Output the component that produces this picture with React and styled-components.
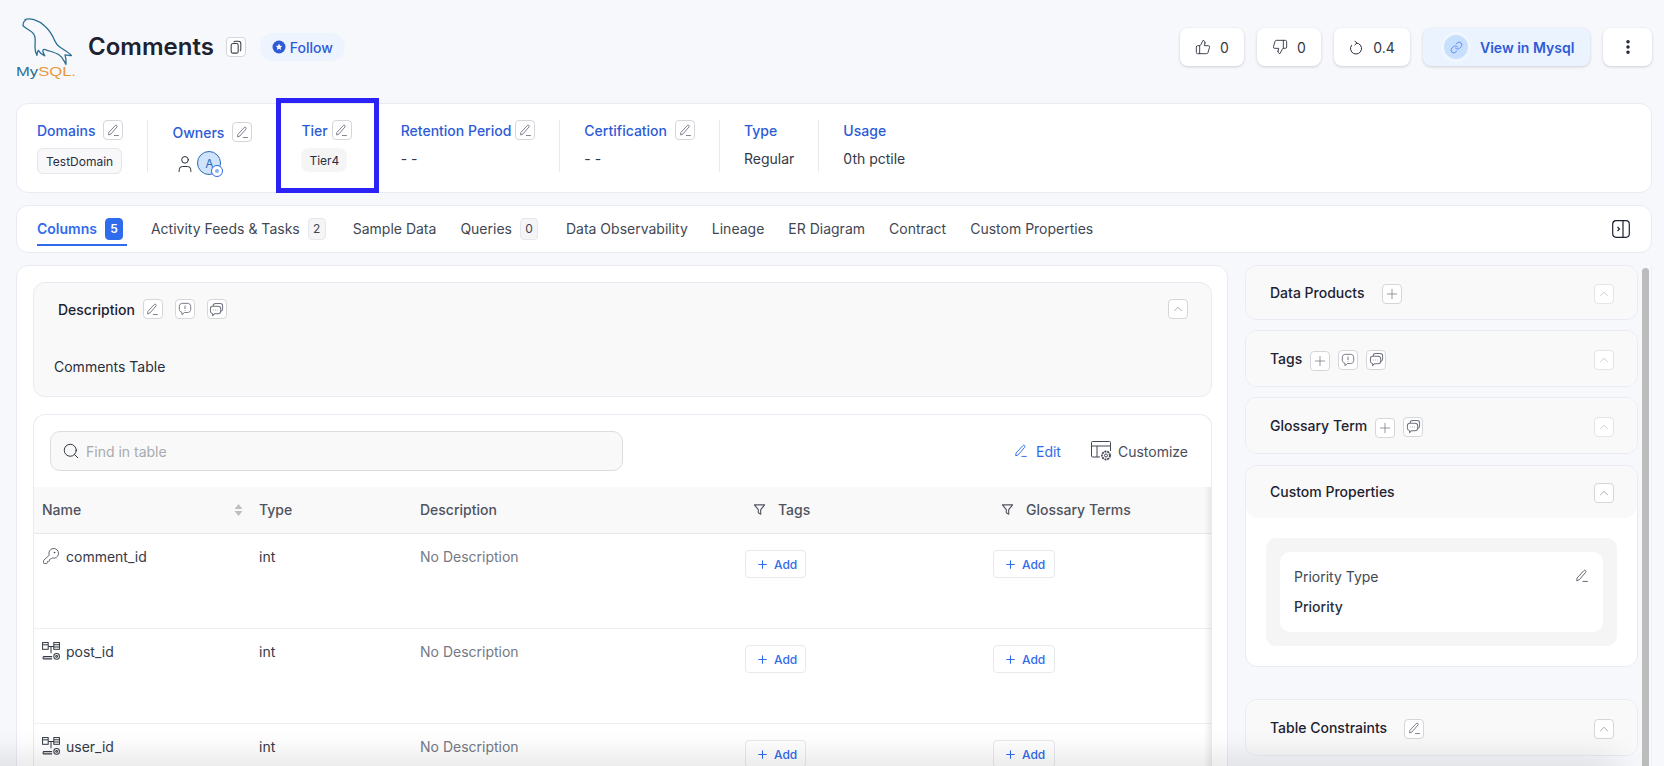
import React from "react";
import styled, { createGlobalStyle } from "styled-components";
import { ThumbsUp, ThumbsDown, Link, Search, KeyRound, Plus, ChevronUp, User, EllipsisVertical } from "lucide-react";

const GlobalStyle = createGlobalStyle`
  * { box-sizing: border-box; }
  body {
    margin: 0;
    background: #f7f8fc;
    font-family: Inter, "Noto Sans", sans-serif;
    color: #292f3d;
    overflow: hidden;
  }
`;

const BLUE = "#2d5bd7";
const LINK = "#2f6bed";

const Page = styled.div`
  position: relative;
  width: 1664px;
  height: 766px;
  padding: 0 12px 0 16px;
  overflow: hidden;
`;

const BottomFade = styled.div`
  position: absolute;
  left: -30px;
  right: 50px;
  bottom: -14px;
  height: 14px;
  box-shadow: 0 0 34px 4px rgba(0, 0, 0, 0.16);
`;

/* header */
const Header = styled.header`
  display: flex;
  align-items: flex-start;
  height: 103px;
  padding-top: 17px;
`;

const LogoMark = styled.svg`
  width: 60px;
  height: 62px;
  margin-right: 12px;
  flex: none;
`;

const TitleGroup = styled.div`
  display: flex;
  align-items: center;
  height: 32px;
  margin-top: 14px;
`;

const Title = styled.h1`
  margin: 0 12px 0 0;
  font-size: 24px;
  line-height: 32px;
  font-weight: 600;
  color: #1d2230;
`;

const IconButton = styled.span`
  display: inline-flex;
  align-items: center;
  justify-content: center;
  flex: none;
  width: 20px;
  height: 20px;
  margin-top: ${(p) => p.$drop || 0}px;
  background: #fff;
  border: 1px solid ${(p) => (p.$dim ? "#e5e5e8" : "#d5d6da")};
  border-radius: 4px;
  color: ${(p) => (p.$dim ? "#a9acb3" : "#6f7380")};
`;

const FollowPill = styled.span`
  display: inline-flex;
  align-items: center;
  gap: 4px;
  height: 28px;
  margin-left: 14px;
  padding: 0 12px;
  border-radius: 14px;
  background: #edf4fe;
  color: ${BLUE};
  font-size: 14px;
  font-weight: 500;
`;

const HeaderActions = styled.div`
  display: flex;
  align-items: center;
  gap: 13px;
  margin-left: auto;
  margin-top: 11px;
`;

const ActionButton = styled.div`
  display: flex;
  align-items: center;
  justify-content: center;
  gap: ${(p) => (p.$wide ? "10px" : "9px")};
  width: ${(p) => p.$width}px;
  height: 38px;
  background: #fff;
  border-radius: 8px;
  box-shadow: 0 1px 3px rgba(16, 24, 40, 0.18);
  font-size: 14px;
  color: #353a47;
`;

const ViewButton = styled.div`
  display: flex;
  align-items: center;
  gap: 12px;
  width: 167px;
  height: 38px;
  padding-left: 21px;
  background: #ebf3fe;
  border-radius: 8px;
  box-shadow: 0 1px 3px rgba(16, 24, 40, 0.18);
  color: ${BLUE};
  font-size: 14px;
  font-weight: 600;
`;

const LinkCircle = styled.span`
  display: flex;
  align-items: center;
  justify-content: center;
  width: 24px;
  height: 24px;
  border-radius: 50%;
  background: #c8e0fd;
  box-shadow: 0 0 0 3px #f0f6fe;
`;

/* cards */
const Card = styled.section`
  background: #fff;
  border: 1px solid #e9ebf3;
  border-radius: 12px;
`;

const DetailsCard = styled(Card)`
  display: flex;
  height: 90px;
  padding: 16px 0 0 20px;
`;

const DetailItem = styled.div`
  position: relative;
  align-self: flex-start;
  height: 52px;
  padding-right: 24px;
  margin-right: 24px;
  border-right: 1px solid ${(p) => (p.$last ? "transparent" : "#e9eaee")};
`;

const DetailHead = styled.div`
  display: flex;
  align-items: center;
  gap: ${(p) => p.$gap || 8}px;
  height: 20px;
  margin-top: ${(p) => (p.$shift ? "2px" : "0")};
  color: ${BLUE};
  font-size: 14px;
  font-weight: 500;
`;

const DetailValue = styled.div`
  display: flex;
  align-items: center;
  height: 26px;
  margin-top: ${(p) => (p.$text ? 5 : 8)}px;
  font-size: 14px;
  color: #353a47;
`;

const Chip = styled.span`
  display: inline-flex;
  align-items: center;
  height: ${(p) => (p.$plain ? 24 : 26)}px;
  padding: 0 8px;
  margin-top: ${(p) => (p.$plain ? "-2px" : "0")};
  background: ${(p) => (p.$plain ? "#f5f5f5" : "#f8f8fa")};
  border: ${(p) => (p.$plain ? "0" : "1px solid #e6e6ea")};
  border-radius: ${(p) => (p.$plain ? 8 : 6)}px;
  font-size: 12px;
  color: #292f3d;
`;

const Avatar = styled.span`
  position: relative;
  display: flex;
  align-items: center;
  justify-content: center;
  width: 24px;
  height: 24px;
  margin-left: 2px;
  border-radius: 50%;
  background: #cfe3fb;
  border: 1px solid #2c6cb8;
  color: #2c6cb8;
  font-size: 12px;
`;

const AvatarBadge = styled.span`
  position: absolute;
  right: -3px;
  bottom: -3px;
  width: 12px;
  height: 12px;
  border-radius: 50%;
  background: #fff;
  border: 1px solid ${LINK};
  &::after {
    content: "";
    position: absolute;
    inset: 3px;
    border-radius: 50%;
    background: #8db2ee;
  }
`;

const OwnerIcon = styled(User)`
  margin-left: 3px;
  margin-top: 1px;
`;

const Highlight = styled.div`
  position: absolute;
  left: -25px;
  top: -22px;
  width: 103px;
  height: 95px;
  border: 5px solid #2b22f5;
  pointer-events: none;
`;

const TabsCard = styled(Card)`
  display: flex;
  align-items: stretch;
  gap: 24px;
  height: 48px;
  margin-top: 12px;
  padding: 0 20px;
`;

const Tab = styled.div`
  display: flex;
  align-items: center;
  gap: 8px;
  padding-right: ${(p) => p.$pad || 0}px;
  font-size: 14px;
  font-weight: ${(p) => (p.$active ? 600 : 400)};
  color: ${(p) => (p.$active ? LINK : "#424754")};
  border-bottom: 2px solid ${(p) => (p.$active ? LINK : "transparent")};
  margin-bottom: 6px;
  padding-top: 7px;
`;

const TabBadge = styled.span`
  display: flex;
  align-items: center;
  justify-content: center;
  width: 18px;
  height: 22px;
  border-radius: 4px;
  background: ${(p) => (p.$active ? LINK : "#f5f5f7")};
  border: 1px solid ${(p) => (p.$active ? LINK : "#e6e7ec")};
  color: ${(p) => (p.$active ? "#fff" : "#3f4450")};
  font-size: 12px;
  font-weight: ${(p) => (p.$active ? 600 : 400)};
`;

const PanelToggle = styled.svg`
  align-self: center;
  margin-left: auto;
  margin-right: 1px;
  width: 18px;
  height: 18px;
`;

const Main = styled.div`
  display: flex;
  gap: 17px;
  margin-top: 12px;
`;

const LeftCard = styled(Card)`
  width: 1212px;
  flex: none;
  height: 560px;
  padding: 16px 15px 16px 16px;
`;

const DescriptionCard = styled(Card)`
  height: 115px;
  background: #f9f9f9;
`;

const DescriptionHead = styled.div`
  display: flex;
  align-items: center;
  gap: 12px;
  height: 52px;
  padding: 0 23px 0 24px;
  font-size: 14px;
  font-weight: 500;
  color: #1d2230;
`;

const DescriptionLabel = styled.span`
  margin-right: -4px;
`;

const DescriptionBody = styled.div`
  margin-top: 23px;
  padding-left: 20px;
  font-size: 14px;
  color: #292f3d;
`;

const TableCard = styled(Card)`
  position: relative;
  margin-top: 17px;
  padding-top: 16px;
  border-bottom: 0;
  border-radius: 12px 12px 0 0;
  overflow: hidden;
  height: 380px;
  &::after {
    content: "";
    position: absolute;
    top: 72px;
    right: 0;
    bottom: 0;
    width: 7px;
    background: linear-gradient(to right, rgba(0, 0, 0, 0), rgba(0, 0, 0, 0.07));
  }
`;

const Toolbar = styled.div`
  display: flex;
  align-items: center;
  height: 40px;
  padding: 0 23px 0 16px;
  margin-bottom: 16px;
  font-size: 14px;
`;

const SearchBox = styled.div`
  display: flex;
  align-items: center;
  gap: 6px;
  width: 573px;
  height: 40px;
  padding: 0 11px;
  background: #f9f9f9;
  border: 1px solid #dcdde1;
  border-radius: 10px;
  color: #a8aab0;
`;

const ToolbarLink = styled.span`
  display: flex;
  align-items: center;
  gap: ${(p) => p.$gap}px;
  margin-left: ${(p) => p.$left || 0}px;
  color: ${(p) => (p.$blue ? LINK : "#494e5a")};
`;

const Row = styled.div`
  display: grid;
  grid-template-columns: 217px 161px 325px 248px 228px;
  height: ${(p) => (p.$head ? 47 : 95)}px;
  background: ${(p) => (p.$head ? "#f9f9f9" : "#fff")};
  border-bottom: 1px solid ${(p) => (p.$head ? "#e8e8ea" : "#efeff1")};
  font-size: 14px;
  color: ${(p) => (p.$head ? "#4f5360" : "#353a47")};
  font-weight: ${(p) => (p.$head ? 500 : 400)};
`;

const HeadCell = styled.div`
  display: flex;
  align-items: center;
  justify-content: ${(p) => (p.$between ? "space-between" : "flex-start")};
  gap: 12px;
  padding: 0 ${(p) => (p.$between ? 8 : 0)}px 1px ${(p) => p.$left || 8}px;
`;

const Cell = styled.div`
  display: flex;
  align-items: flex-start;
  gap: 6px;
  padding: 13px 8px 0;
  line-height: 20px;
  color: ${(p) => (p.$muted ? "#757984" : "inherit")};
`;

const AddCell = styled.div`
  padding: 16px 8px 0;
`;

const AddButton = styled.span`
  display: inline-flex;
  align-items: center;
  gap: 5px;
  width: ${(p) => p.$width}px;
  height: 28px;
  padding-left: 10px;
  background: #fff;
  border: 1px solid #e8e9ef;
  border-radius: 4px;
  color: ${LINK};
  font-size: 12px;
  font-weight: 500;
`;

/* right side */
const RightColumn = styled.div`
  width: 393px;
  flex: none;
  display: flex;
  flex-direction: column;
  gap: 10px;
`;

const SideCard = styled(Card)`
  margin-top: ${(p) => p.$top || 0}px;
`;

const SideHead = styled.div`
  display: flex;
  align-items: center;
  gap: ${(p) => p.$gap || 8}px;
  height: ${(p) => p.$height || 55}px;
  padding: 2px 23px 0 24px;
  background: #f9f9fa;
  border-radius: 12px;
  font-size: 14px;
  font-weight: 500;
  color: #1d2230;
`;

const SideTitle = styled.span`
  margin-top: -3px;
`;

const CollapseButton = styled(IconButton)`
  margin-left: auto;
`;

const SideBody = styled.div`
  padding: 20px;
`;

const PropertyBox = styled.div`
  padding: 14px;
  background: #f5f5f6;
  border-radius: 10px;
`;

const PropertyInner = styled.div`
  height: 80px;
  padding: 14px;
  background: #fff;
  border-radius: 10px;
  font-size: 14px;
`;

const PropertyRow = styled.div`
  display: flex;
  align-items: center;
  justify-content: space-between;
  height: 20px;
  margin-bottom: 10px;
  color: ${(p) => (p.$strong ? "#292f3d" : "#424754")};
  font-weight: ${(p) => (p.$strong ? 500 : 400)};
`;

const ScrollTrack = styled.div`
  width: 14px;
  flex: none;
  margin-left: -17px;
  padding: 3px 2px 0 4px;
  height: 560px;
  border-right: 1px solid #eef0f6;
`;

const ScrollThumb = styled.div`
  height: 100%;
  background: #bcbcbc;
  border-radius: 4px 4px 0 0;
`;

/* icons */
const PencilIcon = ({ size = 13, color = "currentColor" }) => (
  <svg width={size} height={size} viewBox="0 0 16 16" fill="none" stroke={color} strokeWidth="1.1" strokeLinejoin="round">
    <path d="M10.2 1.8c.6-.6 1.500-.5 2 0 .5.6.5 1.300 0 1.900l-7.300 8.600-2.900 1.200.3-3.100z" />
    <path d="M8.600 14.200h6" />
  </svg>
);

const BubbleIcon = () => (
  <svg width="14" height="14" viewBox="0 0 16 16" fill="none" stroke="currentColor" strokeWidth="1.1" strokeLinejoin="round">
    <path d="M5 1.500h6c2 0 3.500 1.500 3.500 3.500v3.500c0 2-1.500 3.500-3.500 3.500H7.500l-3 2.500v-2.700C2.800 11.400 1.500 10 1.500 8.500V5c0-2 1.500-3.500 3.500-3.500z" />
    <path d="M8 4.200v3.800M8 9.400v.6" />
  </svg>
);

const BubblesIcon = () => (
  <svg width="15" height="15" viewBox="0 0 16 16" fill="none" stroke="currentColor" strokeWidth="1.1" strokeLinejoin="round">
    <path d="M4.500 4.300V4c0-1.400 1.100-2.500 2.500-2.500h5c1.400 0 2.500 1.100 2.500 2.500v3.500c0 1.200-.8 2.200-2 2.500" />
    <path d="M4 4.500h5.500c1.700 0 3 1.300 3 3v2c0 1.700-1.300 3-3 3H6l-2.200 2v-2.100C2.400 12 1.500 10.900 1.500 9.500v-2.500c0-1.400 1.100-2.500 2.500-2.500z" />
    <path d="M4.400 8.500h.5M6.700 8.500h.5M9 8.500h.5" />
  </svg>
);

const CopyIcon = () => (
  <svg width="14" height="14" viewBox="0 0 16 16" fill="none" stroke="#3b3f4a" strokeWidth="1.200" strokeLinejoin="round">
    <rect x="2.500" y="4" width="8" height="11" rx="2" />
    <path d="M5.500 2.600c.3-.7 1-1.100 1.700-1.100h3.600c1.500 0 2.700 1.200 2.700 2.700v6.600c0 .8-.4 1.500-1.100 1.800" />
  </svg>
);

const FollowIcon = () => (
  <svg width="14" height="14" viewBox="0 0 14 14">
    <circle cx="7" cy="7" r="6.500" fill={BLUE} />
    <path d="M7 3.600l1 2.200 2.300.2-1.700 1.600.5 2.300-2.100-1.200-2.100 1.200.5-2.300-1.700-1.600 2.300-.2z" fill="#fff" />
  </svg>
);

const VersionIcon = () => (
  <svg width="14" height="15" viewBox="0 0 14 15" fill="none" stroke="#2b2f3a" strokeWidth="1" strokeLinejoin="round">
    <path d="M7 3a5.500 5.500 0 1 1-4.300 2.100" />
    <path d="M5.600 .8L7.800 3 5.600 5.200" />
  </svg>
);

const FilterIcon = () => (
  <svg width="13" height="13" viewBox="0 0 14 14" fill="none" stroke="#50545f" strokeWidth="1.200" strokeLinejoin="round">
    <path d="M1.500 2h11L8.300 7.200v4.800L5.700 10.600V7.200z" />
  </svg>
);

const SortIcon = () => (
  <svg width="9" height="14" viewBox="0 0 9 14" fill="#bfbfc3">
    <path d="M4.500 1L8.500 6h-8zM4.500 13L.5 8h8z" />
  </svg>
);

const ForeignKeyIcon = () => (
  <svg width="18" height="18" viewBox="0 0 16 16" fill="none" stroke="#353a47" strokeWidth="0.900">
    <rect x="0.500" y="0.500" width="5" height="6" />
    <path d="M0.500 2.500h5" />
    <rect x="10.500" y="0.500" width="5" height="6" />
    <path d="M10.500 2.500h5M10.500 4.500h5M5.500 4h2.500v6M10.500 4H8" />
    <path d="M1 13h8M1 15h8M1 13v2" />
    <circle cx="13" cy="12.800" r="2.500" />
    <circle cx="13" cy="12.800" r="0.800" />
  </svg>
);

const CustomizeIcon = () => (
  <svg width="21" height="20" viewBox="0 0 21 20" fill="none" stroke="#424754" strokeWidth="1">
    <path d="M9 16H1.500a1 1 0 0 1-1-1V1.500a1 1 0 0 1 1-1h17a1 1 0 0 1 1 1V10M.5 5h19M6 5v11" />
    <circle cx="15" cy="14.500" r="4" fill="#fff" strokeDasharray="2 .8" strokeWidth="1.800" />
    <circle cx="15" cy="14.500" r="1.500" />
  </svg>
);

const MySqlLogo = () => (
  <LogoMark viewBox="16 17 60 62" fill="none">
    <path
      d="M25 19.500c2.500-1 6-.7 9 .2 4 1.300 8 3.500 11 6.500 4.500 4.200 7.500 9 9.500 14 1.300 3.300 2.700 5 5.500 7 3.500 2.400 8 4.800 11.500 8.200-1.500.7-4.500-.4-6.500-.6 1 3 1.300 5 1 9.500-2.500-4-3.500-7.200-7-9.500-3.500-2.300-8-3.200-13-5-1.500-.6-2.500-.6-3 .2-.5.800.2 3 1.800 5.800-3-1.300-5-3-6.500-5.500-.8 1.500-1.200 3-1.300 5-1.500-2.500-2-5-2-8 0-3.500.5-7 0-10-.5-2.700-2.500-5-5-6.500-2.500-1.800-5-3-7-5 0-3 .5-4.700 3-5.800z"
      stroke="#2c6e93"
      strokeWidth="1.300"
      strokeLinejoin="round"
    />
    <text x="16" y="76" fontFamily="Liberation Sans, sans-serif" fontSize="13" textLength="60" lengthAdjust="spacingAndGlyphs">
      <tspan fill="#2c6e93">My</tspan>
      <tspan fill="#e8973a">SQL.</tspan>
    </text>
  </LogoMark>
);

const rows = [
  { name: "comment_id", icon: <KeyRound size={18} strokeWidth={1} color="#353a47" /> },
  { name: "post_id", icon: <ForeignKeyIcon /> },
  { name: "user_id", icon: <ForeignKeyIcon /> },
];

const tabs = [
  { label: "Activity Feeds & Tasks", badge: 2, pad: 3 },
  { label: "Sample Data" },
  { label: "Queries", badge: 0, pad: 4 },
  { label: "Data Observability" },
  { label: "Lineage" },
  { label: "ER Diagram" },
  { label: "Contract" },
  { label: "Custom Properties" },
];

const Collapse = ({ dim }) => (
  <CollapseButton $dim={dim}>
    <ChevronUp size={14} strokeWidth={1} />
  </CollapseButton>
);

const EditButton = () => (
  <IconButton>
    <PencilIcon />
  </IconButton>
);

const AddIcon = ({ drop }) => (
  <IconButton $drop={drop}>
    <Plus size={16} strokeWidth={1.1} />
  </IconButton>
);

export default function App() {
  return (
    <Page>
      <GlobalStyle />
      <Header>
        <MySqlLogo />
        <TitleGroup>
          <Title>Comments</Title>
          <IconButton>
            <CopyIcon />
          </IconButton>
          <FollowPill>
            <FollowIcon />
            Follow
          </FollowPill>
        </TitleGroup>
        <HeaderActions>
          <ActionButton $width={64}>
            <ThumbsUp size={16} strokeWidth={1.400} />0
          </ActionButton>
          <ActionButton $width={64}>
            <ThumbsDown size={16} strokeWidth={1.400} />0
          </ActionButton>
          <ActionButton $width={76} $wide>
            <VersionIcon />
            0.4
          </ActionButton>
          <ViewButton>
            <LinkCircle>
              <Link size={13} strokeWidth={1.300} color={LINK} />
            </LinkCircle>
            View in Mysql
          </ViewButton>
          <ActionButton $width={49}>
            <EllipsisVertical size={18} strokeWidth={2.600} color="#1d2230" />
          </ActionButton>
        </HeaderActions>
      </Header>

      <DetailsCard>
        <DetailItem>
          <DetailHead>
            Domains
            <EditButton />
          </DetailHead>
          <DetailValue>
            <Chip>TestDomain</Chip>
          </DetailValue>
        </DetailItem>
        <DetailItem>
          <DetailHead $shift>
            Owners
            <EditButton />
          </DetailHead>
          <DetailValue>
            <OwnerIcon size={20} strokeWidth={1.200} color="#292f3d" />
            <Avatar>
              A
              <AvatarBadge />
            </Avatar>
          </DetailValue>
        </DetailItem>
        <DetailItem $last>
          <DetailHead $gap={4}>
            Tier
            <EditButton />
          </DetailHead>
          <DetailValue>
            <Chip $plain>Tier4</Chip>
          </DetailValue>
          <Highlight />
        </DetailItem>
        <DetailItem>
          <DetailHead $gap={4}>
            Retention Period
            <EditButton />
          </DetailHead>
          <DetailValue $text>- -</DetailValue>
        </DetailItem>
        <DetailItem>
          <DetailHead>
            Certification
            <EditButton />
          </DetailHead>
          <DetailValue $text>- -</DetailValue>
        </DetailItem>
        <DetailItem>
          <DetailHead>Type</DetailHead>
          <DetailValue $text>Regular</DetailValue>
        </DetailItem>
        <DetailItem $last>
          <DetailHead>Usage</DetailHead>
          <DetailValue $text>0th pctile</DetailValue>
        </DetailItem>
      </DetailsCard>

      <TabsCard>
        <Tab $active $pad={4}>
          Columns
          <TabBadge $active>5</TabBadge>
        </Tab>
        {tabs.map((tab) => (
          <Tab key={tab.label} $pad={tab.pad}>
            {tab.label}
            {tab.badge !== undefined && <TabBadge>{tab.badge}</TabBadge>}
          </Tab>
        ))}
        <PanelToggle viewBox="0 0 18 18" fill="none" stroke="#1d2230" strokeWidth="1.200">
          <rect x="0.700" y="0.700" width="16.600" height="16.600" rx="3.500" />
          <path d="M11 .7v16.600M5.500 7l2 2-2 2" />
        </PanelToggle>
      </TabsCard>

      <Main>
        <LeftCard>
          <DescriptionCard>
            <DescriptionHead>
              <DescriptionLabel>Description</DescriptionLabel>
              <EditButton />
              <IconButton>
                <BubbleIcon />
              </IconButton>
              <IconButton>
                <BubblesIcon />
              </IconButton>
              <Collapse />
            </DescriptionHead>
            <DescriptionBody>Comments Table</DescriptionBody>
          </DescriptionCard>

          <TableCard>
            <Toolbar>
              <SearchBox>
                <Search size={18} strokeWidth={1.200} color="#1d2230" />
                Find in table
              </SearchBox>
              <ToolbarLink $blue $gap={8} $left={391}>
                <PencilIcon size={14} color={LINK} />
                Edit
              </ToolbarLink>
              <ToolbarLink $gap={6} $left={30}>
                <CustomizeIcon />
                Customize
              </ToolbarLink>
            </Toolbar>
            <Row $head>
              <HeadCell $between>
                Name
                <SortIcon />
              </HeadCell>
              <HeadCell>Type</HeadCell>
              <HeadCell>Description</HeadCell>
              <HeadCell $left={16}>
                <FilterIcon />
                Tags
              </HeadCell>
              <HeadCell $left={16}>
                <FilterIcon />
                Glossary Terms
              </HeadCell>
            </Row>
            {rows.map((row) => (
              <Row key={row.name}>
                <Cell>
                  {row.icon}
                  {row.name}
                </Cell>
                <Cell>int</Cell>
                <Cell $muted>No Description</Cell>
                <AddCell>
                  <AddButton $width={61}>
                    <Plus size={13} strokeWidth={2} />
                    Add
                  </AddButton>
                </AddCell>
                <AddCell>
                  <AddButton $width={62}>
                    <Plus size={13} strokeWidth={2} />
                    Add
                  </AddButton>
                </AddCell>
              </Row>
            ))}
          </TableCard>
        </LeftCard>

        <RightColumn>
          <SideCard>
            <SideHead $gap={17} $height={53}>
              <SideTitle>Data Products</SideTitle>
              <AddIcon />
              <Collapse dim />
            </SideHead>
          </SideCard>
          <SideCard>
            <SideHead>
              <SideTitle>Tags</SideTitle>
              <AddIcon drop={2} />
              <IconButton>
                <BubbleIcon />
              </IconButton>
              <IconButton>
                <BubblesIcon />
              </IconButton>
              <Collapse dim />
            </SideHead>
          </SideCard>
          <SideCard>
            <SideHead>
              <SideTitle>Glossary Term</SideTitle>
              <AddIcon drop={2} />
              <IconButton>
                <BubblesIcon />
              </IconButton>
              <Collapse dim />
            </SideHead>
          </SideCard>
          <SideCard $top={1}>
            <SideHead $height={52}>
              <SideTitle>Custom Properties</SideTitle>
              <Collapse />
            </SideHead>
            <SideBody>
              <PropertyBox>
                <PropertyInner>
                  <PropertyRow>
                    Priority Type
                    <PencilIcon size={14} color="#5f636e" />
                  </PropertyRow>
                  <PropertyRow $strong>Priority</PropertyRow>
                </PropertyInner>
              </PropertyBox>
            </SideBody>
          </SideCard>
          <SideCard $top={22}>
            <SideHead $gap={17}>
              <SideTitle>Table Constraints</SideTitle>
              <EditButton />
              <Collapse />
            </SideHead>
          </SideCard>
        </RightColumn>
        <ScrollTrack>
          <ScrollThumb />
        </ScrollTrack>
      </Main>
      <BottomFade />
    </Page>
  );
}
